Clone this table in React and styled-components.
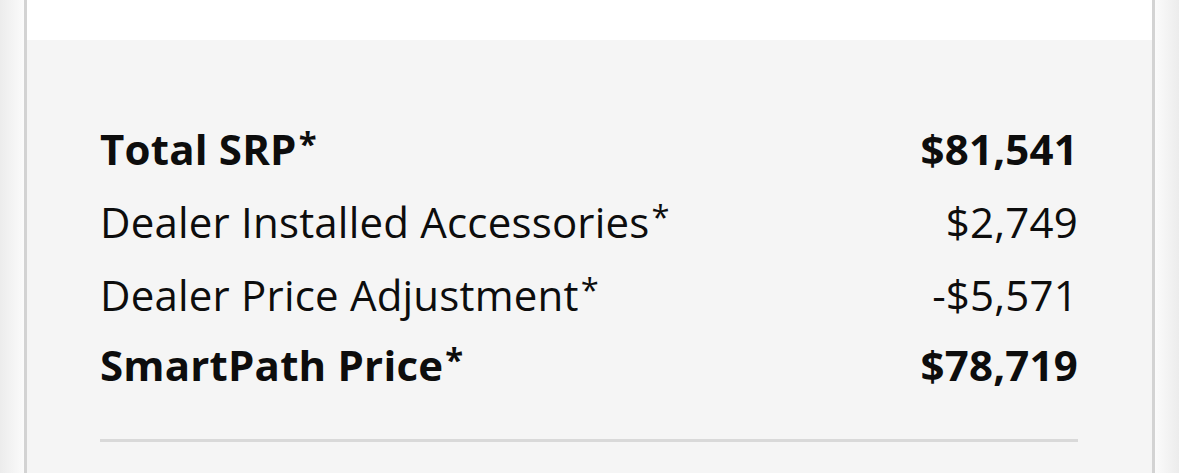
import styled, { createGlobalStyle } from "styled-components";

const GlobalStyle = createGlobalStyle`
  html, body {
    margin: 0;
    padding: 0;
  }
  body {
    background: linear-gradient(
      to right,
      #ececec 0px,
      #fbfbfb 24px,
      #fbfbfb 1155px,
      #ececec 1179px
    );
    font-family: "Open Sans", "Liberation Sans", sans-serif;
    color: #0d0d0d;
  }
`;

const Card = styled.section`
  margin: 0 24px;
  border-left: 3px solid #d3d3d3;
  border-right: 3px solid #d3d3d3;
  min-height: 473px;
  display: flex;
  flex-direction: column;
`;

const TopStrip = styled.div`
  height: 40px;
  background-color: #ffffff;
`;

const Summary = styled.div`
  flex: 1;
  background-color: #f5f5f5;
  padding: 72px 74px 0 73px;
`;

const Row = styled.div`
  display: flex;
  justify-content: space-between;
  align-items: baseline;
  font-size: 42px;
  line-height: 73px;
  font-weight: ${(p) => (p.$bold ? 700 : 400)};
  letter-spacing: 0.2px;
  margin-top: ${(p) => (p.$tight ? "-3px" : "0")};
`;

const Star = styled.sup`
  font-size: 0.78em;
  line-height: 0;
  vertical-align: 0.28em;
  margin-left: 2px;
`;

const Divider = styled.hr`
  margin: 38px 0 0 0;
  border: none;
  border-top: 3px solid #d9d9d9;
`;

const rows = [
  { label: "Total SRP", value: "$81,541", bold: true },
  { label: "Dealer Installed Accessories", value: "$2,749" },
  { label: "Dealer Price Adjustment", value: "-$5,571" },
  { label: "SmartPath Price", value: "$78,719", bold: true, tight: true },
];

export default function App() {
  return (
    <>
      <GlobalStyle />
      <Card>
        <TopStrip />
        <Summary>
          {rows.map((r) => (
            <Row key={r.label} $bold={r.bold} $tight={r.tight}>
              <span>
                {r.label}
                <Star>*</Star>
              </span>
              <span>{r.value}</span>
            </Row>
          ))}
          <Divider />
        </Summary>
      </Card>
    </>
  );
}
